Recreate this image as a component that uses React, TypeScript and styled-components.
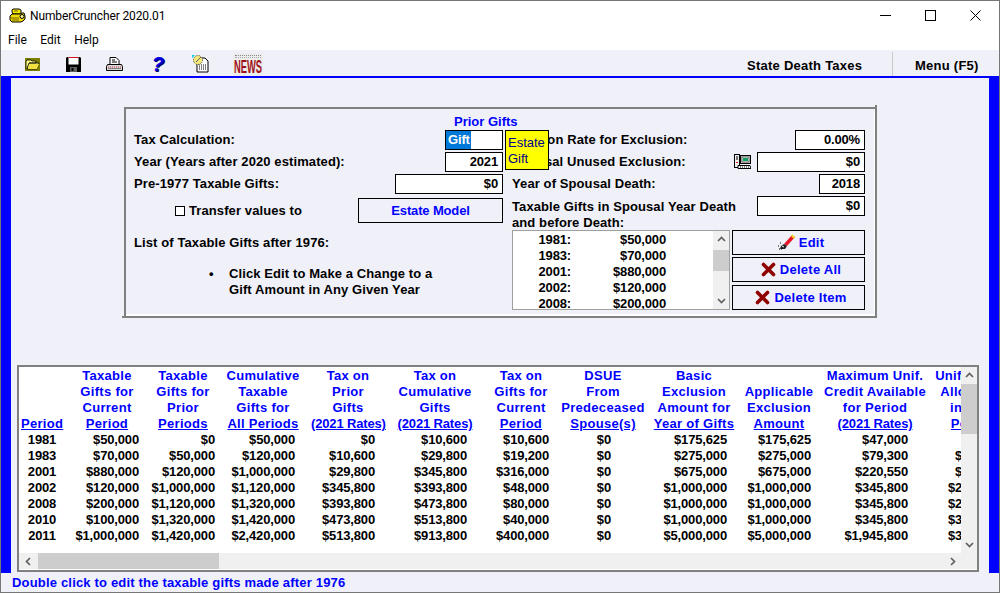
import React from 'react';
import styled, { createGlobalStyle } from 'styled-components';

const GlobalStyle = createGlobalStyle`
  html, body { margin: 0; padding: 0; background: #fff; }
  * { box-sizing: border-box; }
`;

const BLUE = '#0000ff';
const INK = '#000000';
const PAGE = '#f0f0f8';
const FONT = '"Liberation Sans", Arial, sans-serif';
const UI_FONT = 'Roboto, "Noto Sans", sans-serif';

const Window = styled.div`
  width: 1000px;
  height: 593px;
  display: flex;
  flex-direction: column;
  border: 1px solid #767676;
  background: #fff;
  overflow: hidden;
  font: bold 13px/16px ${FONT};
  color: ${INK};
`;

const TitleBar = styled.div`
  height: 29px;
  flex: none;
  display: flex;
  align-items: center;
  padding: 0 1px 0 8px;
  font: 12px ${UI_FONT};
`;

const AppName = styled.span`
  margin-left: 4px;
  flex: 1;
  letter-spacing: -0.12px;
`;

const WindowButton = styled.span`
  width: 45px;
  height: 29px;
  display: flex;
  align-items: center;
  justify-content: center;
`;

const MenuBar = styled.div`
  height: 20px;
  flex: none;
  display: flex;
  align-items: center;
  gap: 13.5px;
  padding-left: 7px;
  font: 12px ${UI_FONT};
`;

const Toolbar = styled.div`
  height: 28px;
  flex: none;
  display: flex;
  align-items: center;
  padding-top: 2px;
  background: ${PAGE};
  border-bottom: 2px solid ${BLUE};
`;

const ToolIcon = styled.span<{ $width: number; $gap: number }>`
  width: ${p => p.$width}px;
  margin-left: ${p => p.$gap}px;
  display: flex;
  justify-content: center;
`;

const Help = styled.span`
  font: italic bold 21px/22px ${FONT};
  color: #0000e0;
  text-shadow: 1px 1px 0 #000060;
`;

const News = styled.span`
  width: 30px;
  height: 23px;
  display: flex;
  flex-direction: column;
  align-items: center;
  background: #ececec;
`;

const NewsRule = styled.span`
  width: 26px;
  height: 3px;
  margin: 2px 0 1px;
  flex: none;
  border-top: 1px dotted #888;
  border-bottom: 1px dotted #aaa;
`;

const NewsWord = styled.span`
  flex: none;
  font: bold 18px/16px ${FONT};
  color: #a01018;
  transform: scaleX(0.52);
`;

const ToolSpacer = styled.span`
  flex: 1;
`;

const ToolLabel = styled.span`
  width: 145px;
  height: 24px;
  align-self: flex-end;
  display: flex;
  align-items: center;
  padding-top: 3px;
  font-size: 13px;
  letter-spacing: 0.25px;
`;

const MenuLabel = styled(ToolLabel)`
  width: 107px;
  padding-left: 22px;
  border-left: 1px solid #c8c8c8;
`;

const Body = styled.main`
  flex: 1;
  background: ${PAGE};
  border-left: 10px solid ${BLUE};
  border-right: 10px solid ${BLUE};
  display: flex;
  flex-direction: column;
`;

const Panel = styled.section`
  width: 753px;
  height: 211px;
  margin: 29px 0 0 113px;
  padding: 5px 9px 0 8px;
  border: 2px solid #808080;
  box-shadow: inset -1px -2px 0 #fff;
  position: relative;
  letter-spacing: 0.1px;

  &::before {
    content: '';
    position: absolute;
    top: -4px;
    right: -2px;
    width: 2px;
    height: 2px;
    background: #808080;
  }

  &::after {
    content: '';
    position: absolute;
    left: -4px;
    bottom: -2px;
    width: 2px;
    height: 2px;
    background: #808080;
  }
`;

const PanelTitle = styled.div`
  color: ${BLUE};
  padding-left: 320px;
  height: 16px;
  letter-spacing: 0;
`;

const Columns = styled.div`
  display: grid;
  grid-template-columns: 369px 353px;
  column-gap: 9px;
`;

const Column = styled.div`
  display: flex;
  flex-direction: column;
`;

const Row = styled.div`
  height: 22px;
  display: flex;
  align-items: flex-start;
  justify-content: space-between;
`;

const RowLabel = styled.span`
  line-height: 20px;
  flex: 1;
`;

const Field = styled.div<{ $width: number }>`
  width: ${p => p.$width}px;
  height: 20px;
  flex: none;
  padding: 0 4px;
  background: #fff;
  border: 1px solid #000;
  line-height: 18px;
  text-align: right;
  letter-spacing: -0.15px;
`;

const SelectField = styled(Field)`
  padding: 0;
  text-align: left;
`;

const Selected = styled.span`
  display: block;
  width: 25px;
  height: 18px;
  padding-left: 2px;
  line-height: 18px;
  background: #0078d7;
  color: #fff;
`;

const TransferRow = styled.div`
  height: 25px;
  margin-top: 2px;
  display: flex;
  align-items: center;
  padding-left: 41px;
`;

const CheckBox = styled.span`
  width: 10px;
  height: 10px;
  margin-right: 4px;
  border: 1px solid #000;
  background: #fff;
`;

const TransferText = styled.span`
  flex: 1;
`;

const ModelButton = styled.div`
  width: 145px;
  height: 25px;
  border: 1px solid #000;
  color: ${BLUE};
  line-height: 23px;
  text-align: center;
  letter-spacing: -0.15px;
`;

const ListHeading = styled.div`
  margin-top: 12px;
`;

const Hint = styled.ul`
  margin: 15px 0 0;
  padding: 0 0 0 95px;
  list-style: none;
  width: 320px;
  position: relative;

  &::before {
    content: '•';
    position: absolute;
    left: 75px;
  }
`;

const SpouseIcon = styled.span`
  margin-right: 6px;
  display: flex;
  height: 20px;
  align-items: center;
`;

const WrapRow = styled.div`
  height: 34px;
  display: flex;
  align-items: flex-start;
`;

const WrapLabel = styled.span`
  flex: 1;
  padding-top: 3px;
  line-height: 16px;
`;

const ListArea = styled.div`
  display: flex;
  gap: 2px;
`;

const GiftList = styled.div`
  width: 218px;
  height: 80px;
  display: flex;
  background: #fff;
  border: 1px solid #a0a0a0;
  overflow: hidden;
`;

const GiftRows = styled.div`
  flex: 1;
  padding-top: 1px;
`;

const GiftRow = styled.div`
  display: grid;
  grid-template-columns: 58px 95px;
  text-align: right;
  letter-spacing: -0.15px;
`;

const VTrack = styled.div`
  width: 16px;
  display: flex;
  flex-direction: column;
  align-items: stretch;
  background: #f0f0f0;
`;

const ArrowCell = styled.span`
  height: 17px;
  flex: none;
  display: flex;
  align-items: center;
  justify-content: center;
`;

const VThumbSpace = styled.div`
  flex: 1;
`;

const VThumb = styled.div<{ $top: number; $height: number }>`
  margin-top: ${p => p.$top}px;
  height: ${p => p.$height}px;
  background: #cdcdcd;
`;

const ActionButtons = styled.div`
  width: 133px;
  display: flex;
  flex-direction: column;
  gap: 2px;
`;

const ActionButton = styled.div`
  height: 25px;
  flex: none;
  display: flex;
  align-items: center;
  justify-content: center;
  gap: 4px;
  padding-left: 5px;
  border: 1px solid #000;
  color: ${BLUE};
  letter-spacing: 0.25px;

  &:last-child {
    margin-top: 1px;
  }
`;

const GridFrame = styled.section`
  width: 962px;
  height: 207px;
  margin: 47px 0 0 6px;
  padding-bottom: 1px;
  display: grid;
  grid-template-columns: 1fr 16px;
  grid-template-rows: 186px 16px;
  border: 2px solid #808080;
  background: #fff;
`;

const GridScroll = styled.div`
  overflow: hidden;
  padding: 1px 0 0 2px;
`;

const Table = styled.table`
  width: 992px;
  table-layout: fixed;
  border-collapse: collapse;
  letter-spacing: -0.15px;
`;

const HeadCell = styled.th`
  padding: 0;
  vertical-align: bottom;
  text-align: center;
  font-weight: bold;
  color: ${BLUE};
  letter-spacing: 0.3px;
  white-space: nowrap;
`;

const HeadLast = styled.u<{ $tight: boolean }>`
  text-decoration: underline;
  letter-spacing: ${p => (p.$tight ? '-0.15px' : '0.3px')};
`;

const Cell = styled.td<{ $pad: number }>`
  padding: 0 ${p => p.$pad}px 0 0;
  text-align: right;
  white-space: nowrap;
  height: 16px;
`;

const YearCell = styled.td`
  padding: 0;
  text-align: center;
`;

const HTrack = styled.div`
  background: #f0f0f0;
  display: flex;
  align-items: center;
`;

const HThumb = styled.div`
  width: 181px;
  height: 16px;
  background: #cdcdcd;
`;

const HArrow = styled.span<{ $width: number }>`
  width: ${p => p.$width}px;
  height: 16px;
  flex: none;
  display: flex;
  align-items: center;
  justify-content: center;
`;

const HSpacer = styled.span`
  flex: 1;
`;

const Corner = styled.div`
  background: #f0f0f0;
`;

const StatusBar = styled.footer`
  height: 19px;
  flex: none;
  padding-left: 11px;
  background: ${PAGE};
  color: ${BLUE};
  line-height: 20px;
  letter-spacing: 0.18px;
`;

const Tooltip = styled.div`
  position: absolute;
  left: 379px;
  top: 21px;
  width: 44px;
  height: 40px;
  padding: 4px 0 0 2px;
  background: #ffff00;
  border: 1px solid #000;
  color: #000090;
  font-weight: normal;
  line-height: 16px;
  letter-spacing: 0;
`;

const Chevron = ({ dir }: { dir: 'up' | 'down' | 'left' | 'right' }) => {
  const points = {
    up: '1,6 4.5,2.5 8,6',
    down: '1,3 4.5,6.5 8,3',
    left: '6,1 2.5,4.5 6,8',
    right: '3,1 6.5,4.5 3,8',
  }[dir];
  return (
    <svg width="9" height="9" viewBox="0 0 9 9">
      <polyline points={points} fill="none" stroke="#606060" strokeWidth="1.7" />
    </svg>
  );
};

const CoinsIcon = () => (
  <svg width="17" height="15" viewBox="0 0 17 15">
    <path d="M4 1h6l2 1v3l-1 1H4L3 4V2z" fill="#f8e800" stroke="#000" />
    <path d="M1 8l2-2h8l2-1h2l1 3v3l-2 2-2 1H3l-2-2z" fill="#f0dc00" stroke="#000" />
    <path d="M2 10h8M3 12h7M5 3h4" stroke="#706000" />
    <circle cx="13" cy="8.5" r="2" fill="#fff8a0" stroke="#000" />
  </svg>
);

const FolderIcon = () => (
  <svg width="15" height="13" viewBox="0 0 15 13">
    <rect width="15" height="13" fill="#808000" />
    <path d="M1 11V3l1-1h4l1 1h4v2H4l-2 6h10l2-6H4" fill="#ffff80" stroke="#000" strokeWidth="0.8" />
    <path d="M3 11l2-5h9l-2 5z" fill="#f0e040" />
  </svg>
);

const FloppyIcon = () => (
  <svg width="15" height="15" viewBox="0 0 15 15">
    <path d="M0 1l1-1h13l1 1v14H0z" fill="#000" />
    <rect x="2.5" y="0" width="10" height="7.5" fill="#fff" />
    <rect x="2.5" y="0" width="10" height="1" fill="#d01020" />
    <rect x="4" y="10" width="7" height="5" fill="#606060" />
    <rect x="5.5" y="11" width="2" height="3" fill="#000" />
  </svg>
);

const PrinterIcon = () => (
  <svg width="17" height="15" viewBox="0 0 17 15">
    <path d="M4 .5h6l3 3V8H4z" fill="#fff" stroke="#000" />
    <path d="M6 3h3M6 5h5" stroke="#000" />
    <path d="M1.5 7.5h14l1 2v4h-16v-4z" fill="#d8d8d8" stroke="#000" />
    <path d="M2 10h13" stroke="#d03040" strokeDasharray="1 1" />
    <path d="M2 11.5h13" stroke="#808080" />
  </svg>
);

const NoteIcon = () => (
  <svg width="17" height="18" viewBox="0 0 17 18">
    <path d="M5 3h8l3 3v11H5z" fill="#fff" stroke="#000" />
    <path d="M7 10h7M7 12h7M7 14h7" stroke="#000" strokeDasharray="1 1" />
    <circle cx="6" cy="5" r="4.5" fill="#f4e878" stroke="#404040" strokeDasharray="1 1" />
    <path d="M0 0h3L0 3z" fill="#00d0e8" />
    <path d="M4 7l5-5" stroke="#606060" />
  </svg>
);

const ComputerIcon = () => (
  <svg width="17" height="16" viewBox="0 0 17 16">
    <rect x="0.5" y="0.5" width="5" height="13" fill="#f0f0f0" stroke="#000" />
    <path d="M2 3h2M2 5h2" stroke="#000" />
    <rect x="2" y="8" width="2" height="1" fill="#e02020" />
    <rect x="6.5" y="1.5" width="10" height="8" fill="#d8d8d8" stroke="#000" />
    <rect x="8" y="3" width="7" height="5" fill="#fff" stroke="#000" strokeWidth="0.6" />
    <rect x="9" y="4" width="5" height="3" fill="#10a060" />
    <path d="M4 11.5h12l1 3H4z" fill="#fff" stroke="#000" />
    <path d="M6 13h9" stroke="#000" strokeDasharray="1 1" />
  </svg>
);

const BrushIcon = () => (
  <svg width="17" height="17" viewBox="0 0 17 17">
    <path d="M6 10l8-9 3 2-8 9z" fill="#e81828" />
    <path d="M13 2l1.5-1.5L17 3l-1.5 1.5z" fill="#f0e020" />
    <path d="M6 10l3 2-2 3H2l1-3z" fill="#202020" />
    <path d="M1 15h3M0 12h2M2 9h2" stroke="#000" strokeDasharray="1 1" />
    <path d="M4 12l2 1" stroke="#fff" />
  </svg>
);

const DeleteIcon = () => (
  <svg width="15" height="15" viewBox="0 0 15 15">
    <path d="M2.5 2.5l10 10M12.5 2.5l-10 10" stroke="#900000" strokeWidth="3.6" strokeLinecap="round" />
  </svg>
);

const gifts = [
  ['1981:', '$50,000'],
  ['1983:', '$70,000'],
  ['2001:', '$880,000'],
  ['2002:', '$120,000'],
  ['2008:', '$200,000'],
];

const columns = [
  { width: 42, pad: 0, head: ['Period'] },
  { width: 88, pad: 12, head: ['Taxable', 'Gifts for', 'Current', 'Period'] },
  { width: 64, pad: 0, head: ['Taxable', 'Gifts for', 'Prior', 'Periods'] },
  { width: 96, pad: 16, head: ['Cumulative', 'Taxable', 'Gifts for', 'All Periods'] },
  { width: 74, pad: 10, head: ['Tax on', 'Prior', 'Gifts', '(2021 Rates)'] },
  { width: 100, pad: 18, head: ['Tax on', 'Cumulative', 'Gifts', '(2021 Rates)'] },
  { width: 72, pad: 8, head: ['Tax on', 'Gifts for', 'Current', 'Period'] },
  { width: 92, pad: 38, head: ['DSUE', 'From', 'Predeceased', 'Spouse(s)'] },
  { width: 90, pad: 12, head: ['Basic', 'Exclusion', 'Amount for', 'Year of Gifts'] },
  { width: 80, pad: 8, head: ['Applicable', 'Exclusion', 'Amount'] },
  { width: 112, pad: 23, head: ['Maximum Unif.', 'Credit Available', 'for Period', '(2021 Rates)'] },
  { width: 82, pad: 12, head: ['Unif. Credit', 'Allowable', 'in This', 'Period'] },
];

const rows = [
  ['1981', '$50,000', '$0', '$50,000', '$0', '$10,600', '$10,600', '$0', '$175,625', '$175,625', '$47,000', '$0'],
  ['1983', '$70,000', '$50,000', '$120,000', '$10,600', '$29,800', '$19,200', '$0', '$275,000', '$275,000', '$79,300', '$10,600'],
  ['2001', '$880,000', '$120,000', '$1,000,000', '$29,800', '$345,800', '$316,000', '$0', '$675,000', '$675,000', '$220,550', '$29,800'],
  ['2002', '$120,000', '$1,000,000', '$1,120,000', '$345,800', '$393,800', '$48,000', '$0', '$1,000,000', '$1,000,000', '$345,800', '$220,550'],
  ['2008', '$200,000', '$1,120,000', '$1,320,000', '$393,800', '$473,800', '$80,000', '$0', '$1,000,000', '$1,000,000', '$345,800', '$279,300'],
  ['2010', '$100,000', '$1,320,000', '$1,420,000', '$473,800', '$513,800', '$40,000', '$0', '$1,000,000', '$1,000,000', '$345,800', '$345,800'],
  ['2011', '$1,000,000', '$1,420,000', '$2,420,000', '$513,800', '$913,800', '$400,000', '$0', '$5,000,000', '$5,000,000', '$1,945,800', '$345,800'],
];

function App() {
  return (
    <Window>
      <GlobalStyle />
      <TitleBar>
        <CoinsIcon />
        <AppName>NumberCruncher 2020.01</AppName>
        <WindowButton>
          <svg width="11" height="11" viewBox="0 0 11 11"><path d="M0 5.5h11" stroke="#000" /></svg>
        </WindowButton>
        <WindowButton>
          <svg width="11" height="11" viewBox="0 0 11 11"><rect x=".5" y=".5" width="10" height="10" fill="none" stroke="#000" /></svg>
        </WindowButton>
        <WindowButton>
          <svg width="11" height="11" viewBox="0 0 11 11"><path d="M.5.5l10 10M10.5.5l-10 10" stroke="#000" /></svg>
        </WindowButton>
      </TitleBar>
      <MenuBar>
        <span>File</span>
        <span>Edit</span>
        <span>Help</span>
      </MenuBar>
      <Toolbar>
        <ToolIcon $width={15} $gap={24}><FolderIcon /></ToolIcon>
        <ToolIcon $width={15} $gap={26}><FloppyIcon /></ToolIcon>
        <ToolIcon $width={17} $gap={25}><PrinterIcon /></ToolIcon>
        <ToolIcon $width={14} $gap={28}><Help>?</Help></ToolIcon>
        <ToolIcon $width={17} $gap={27}><NoteIcon /></ToolIcon>
        <ToolIcon $width={30} $gap={24}>
          <News><NewsRule /><NewsWord>NEWS</NewsWord></News>
        </ToolIcon>
        <ToolSpacer />
        <ToolLabel>State Death Taxes</ToolLabel>
        <MenuLabel>Menu (F5)</MenuLabel>
      </Toolbar>
      <Body>
        <Panel>
          <PanelTitle>Prior Gifts</PanelTitle>
          <Columns>
            <Column>
              <Row>
                <RowLabel>Tax Calculation:</RowLabel>
                <SelectField $width={58}><Selected>Gift</Selected></SelectField>
              </Row>
              <Row>
                <RowLabel>Year (Years after 2020 estimated):</RowLabel>
                <Field $width={58}>2021</Field>
              </Row>
              <Row>
                <RowLabel>Pre-1977 Taxable Gifts:</RowLabel>
                <Field $width={108}>$0</Field>
              </Row>
              <TransferRow>
                <CheckBox />
                <TransferText>Transfer values to</TransferText>
                <ModelButton>Estate Model</ModelButton>
              </TransferRow>
              <ListHeading>List of Taxable Gifts after 1976:</ListHeading>
              <Hint>
                <li>Click Edit to Make a Change to a<br />Gift Amount in Any Given Year</li>
              </Hint>
            </Column>
            <Column>
              <Row>
                <RowLabel>Inflation Rate for Exclusion:</RowLabel>
                <Field $width={70}>0.00%</Field>
              </Row>
              <Row>
                <RowLabel>Spousal Unused Exclusion:</RowLabel>
                <SpouseIcon><ComputerIcon /></SpouseIcon>
                <Field $width={108}>$0</Field>
              </Row>
              <Row>
                <RowLabel>Year of Spousal Death:</RowLabel>
                <Field $width={46}>2018</Field>
              </Row>
              <WrapRow>
                <WrapLabel>Taxable Gifts in Spousal Year Death<br />and before Death:</WrapLabel>
                <Field $width={108}>$0</Field>
              </WrapRow>
              <ListArea>
                <GiftList>
                  <GiftRows>
                    {gifts.map(([year, amount]) => (
                      <GiftRow key={year}><span>{year}</span><span>{amount}</span></GiftRow>
                    ))}
                  </GiftRows>
                  <VTrack>
                    <ArrowCell><Chevron dir="up" /></ArrowCell>
                    <VThumbSpace><VThumb $top={2} $height={21} /></VThumbSpace>
                    <ArrowCell><Chevron dir="down" /></ArrowCell>
                  </VTrack>
                </GiftList>
                <ActionButtons>
                  <ActionButton><BrushIcon />Edit</ActionButton>
                  <ActionButton><DeleteIcon />Delete All</ActionButton>
                  <ActionButton><DeleteIcon />Delete Item</ActionButton>
                </ActionButtons>
              </ListArea>
            </Column>
          </Columns>
          <Tooltip>Estate<br />Gift</Tooltip>
        </Panel>
        <GridFrame>
          <GridScroll>
            <Table>
              <colgroup>
                {columns.map((c, i) => <col key={i} style={{ width: c.width }} />)}
              </colgroup>
              <thead>
                <tr>
                  {columns.map((c, i) => (
                    <HeadCell key={i}>
                      {c.head.map((line, j) => (
                        j === c.head.length - 1
                          ? <HeadLast key={j} $tight={line.startsWith('(')}>{line}</HeadLast>
                          : <React.Fragment key={j}>{line}<br /></React.Fragment>
                      ))}
                    </HeadCell>
                  ))}
                </tr>
              </thead>
              <tbody>
                {rows.map(row => (
                  <tr key={row[0]}>
                    {row.map((value, i) => (
                      i === 0
                        ? <YearCell key={i}>{value}</YearCell>
                        : <Cell key={i} $pad={columns[i].pad}>{value}</Cell>
                    ))}
                  </tr>
                ))}
              </tbody>
            </Table>
          </GridScroll>
          <VTrack>
            <ArrowCell><Chevron dir="up" /></ArrowCell>
            <VThumbSpace><VThumb $top={0} $height={50} /></VThumbSpace>
            <ArrowCell><Chevron dir="down" /></ArrowCell>
          </VTrack>
          <HTrack>
            <HArrow $width={19}><Chevron dir="left" /></HArrow>
            <HThumb />
            <HSpacer />
            <HArrow $width={17}><Chevron dir="right" /></HArrow>
          </HTrack>
          <Corner />
        </GridFrame>
      </Body>
      <StatusBar>Double click to edit the taxable gifts made after 1976</StatusBar>
    </Window>
  );
}

export default App;
